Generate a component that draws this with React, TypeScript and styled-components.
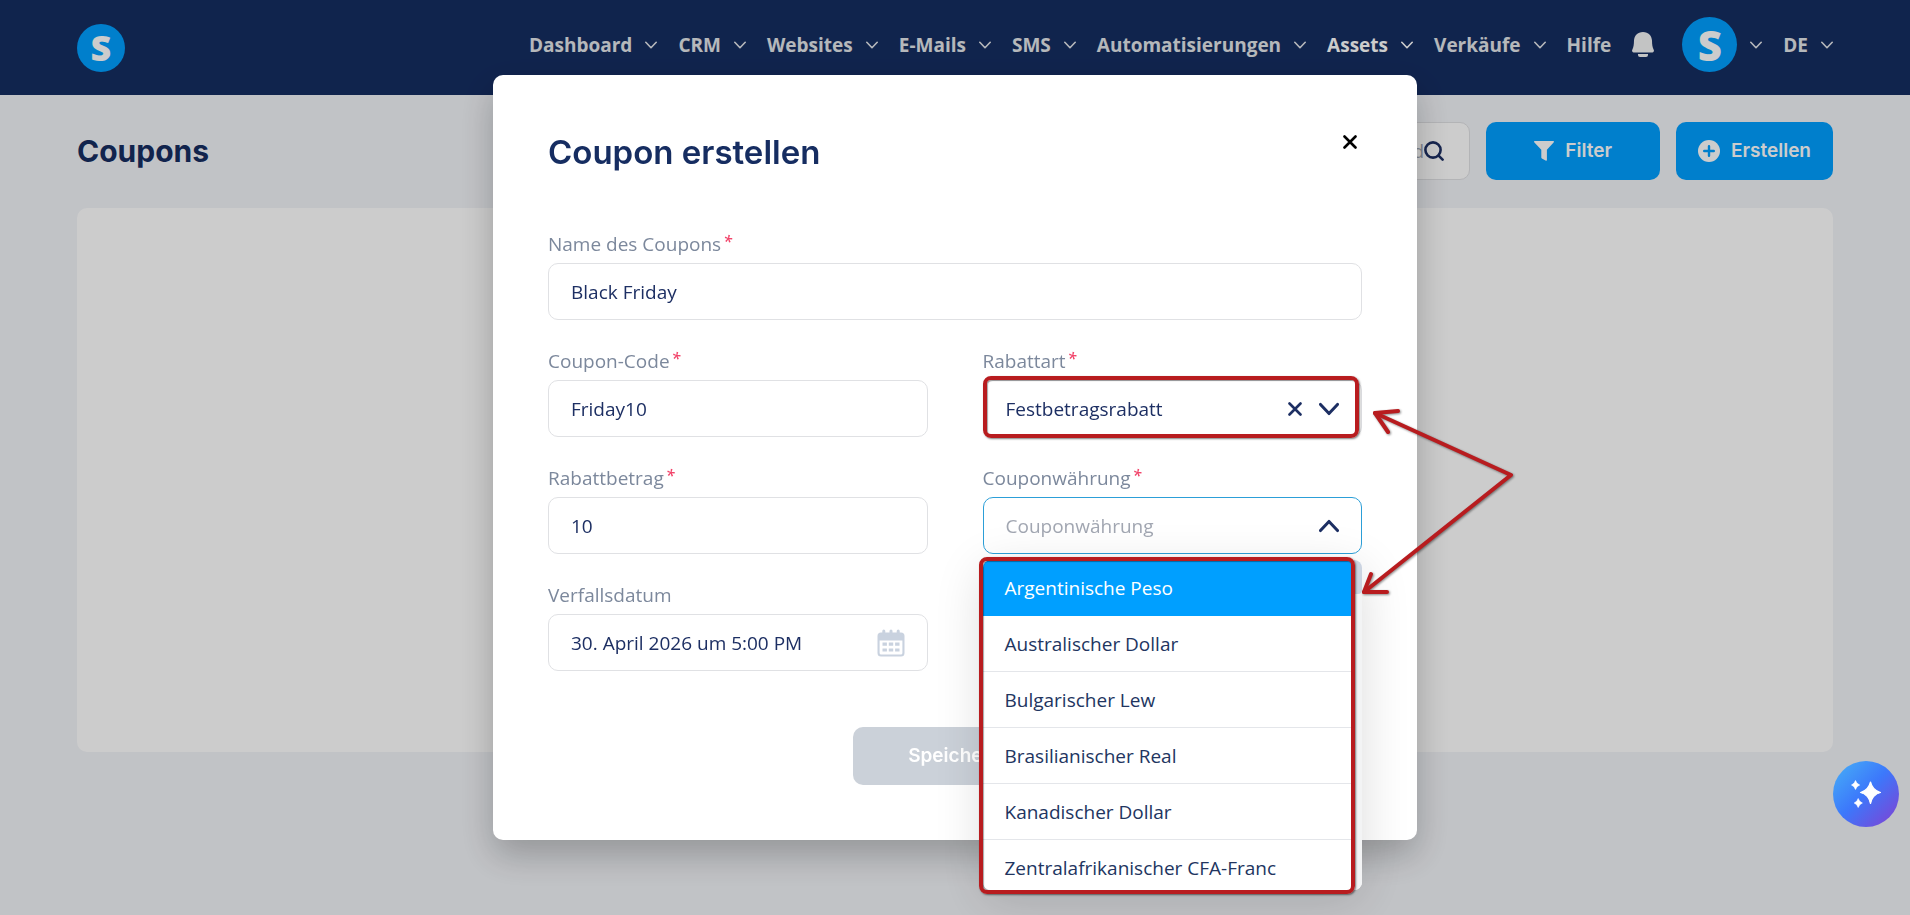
import React, { useId, useState } from 'react';
import styled, { createGlobalStyle, css } from 'styled-components';

const colors = {
  navy: '#162d61',
  text: '#1d2f63',
  label: '#7c889c',
  placeholder: '#a2a7b2',
  border: '#e0e1e4',
  blue: '#009fff',
  mark: '#b81c1f',
};

const GlobalStyle = createGlobalStyle`
  *, *::before, *::after { box-sizing: border-box; }
  body {
    margin: 0;
    background: #f2f4f8;
    color: ${colors.text};
    font-family: "Open Sans", "Noto Sans", sans-serif;
    font-size: 19px;
    line-height: 26px;
  }
  button, input, select { font: inherit; color: inherit; }
`;

const plainButton = css`
  border: 0;
  padding: 0;
  background: none;
  cursor: pointer;
`;

/* ---------- Header ---------- */

const Header = styled.header`
  display: flex;
  align-items: center;
  justify-content: space-between;
  height: 95px;
  padding: 0 77px;
  background: #152d61;
`;

const Logo = styled.span<{ $size: number }>`
  display: flex;
  align-items: center;
  justify-content: center;
  flex: none;
  width: ${(p) => p.$size}px;
  height: ${(p) => p.$size}px;
  border-radius: 50%;
  background: ${colors.blue};
  color: #fff;
  font-family: "Open Sans", sans-serif;
  font-size: ${(p) => (p.$size > 50 ? 42 : 36)}px;
  font-weight: 800;
  line-height: 1;
`;

const LogoLink = styled.a`
  display: flex;
  text-decoration: none;
`;

const Nav = styled.nav`
  display: flex;
  align-items: center;
  gap: 21px;
  padding-bottom: 6px;
`;

const NavButton = styled.button<{ $active?: boolean }>`
  ${plainButton}
  display: flex;
  align-items: center;
  gap: 13px;
  color: ${(p) => (p.$active ? '#ffffff' : '#e3e6ea')};
  font-weight: 700;
`;

const NavLink = styled.a`
  color: #e3e6ea;
  font-weight: 700;
  text-decoration: none;
`;

const Account = styled.div`
  display: flex;
  align-items: center;
  gap: 28px;
`;

/* ---------- Page ---------- */

const Page = styled.main`
  display: flex;
  flex-direction: column;
  gap: 28px;
  padding: 27px 77px;
`;

const PageBar = styled.div`
  display: flex;
  align-items: center;
  justify-content: space-between;
`;

const PageTitle = styled.h1`
  margin: 0;
  color: ${colors.navy};
  font-family: Inter, sans-serif;
  font-size: 30px;
  font-weight: 700;
  line-height: 44px;
`;

const Tools = styled.div`
  display: flex;
  gap: 16px;
`;

const SearchBox = styled.form`
  display: flex;
  align-items: center;
  width: 300px;
  padding: 0 25px 0 22px;
  border: 1px solid ${colors.border};
  border-radius: 10px;
  background: #fff;
`;

const SearchInput = styled.input`
  flex: 1;
  min-width: 0;
  border: 0;
  padding: 0;
  outline: 0;
  background: none;
  text-align: right;
  &::placeholder { color: ${colors.placeholder}; opacity: 1; }
`;

const IconButton = styled.button<{ $box?: number; $color?: string }>`
  ${plainButton}
  display: flex;
  align-items: center;
  justify-content: center;
  flex: none;
  width: ${(p) => p.$box ?? 20}px;
  height: ${(p) => p.$box ?? 20}px;
  color: ${(p) => p.$color ?? colors.text};
`;

const ActionButton = styled.button<{ $pad: number; $muted?: boolean }>`
  display: flex;
  align-items: center;
  justify-content: center;
  gap: 11px;
  height: 58px;
  padding: 0 ${(p) => p.$pad}px;
  border: 0;
  border-radius: 10px;
  background: ${(p) => (p.$muted ? '#cbd1d9' : colors.blue)};
  color: #fff;
  font-family: Inter, sans-serif;
  font-weight: 600;
  cursor: ${(p) => (p.$muted ? 'default' : 'pointer')};
`;

const Card = styled.section`
  min-height: 544px;
  border-radius: 10px;
  background: #fff;
`;

const AssistantButton = styled.button`
  position: fixed;
  right: 11px;
  bottom: 88px;
  z-index: 3;
  display: flex;
  align-items: center;
  justify-content: center;
  width: 66px;
  height: 66px;
  padding: 0;
  border: 0;
  border-radius: 50%;
  background: linear-gradient(135deg, #45a8f7 8%, #3c78fb 48%, #7b45d6 94%);
  cursor: pointer;
`;

/* ---------- Modal ---------- */

const Overlay = styled.div`
  position: fixed;
  inset: 0;
  z-index: 2;
  display: flex;
  align-items: flex-start;
  justify-content: center;
  padding-top: 75px;
  background: rgba(0, 0, 0, 0.2);
`;

const Modal = styled.div`
  position: relative;
  width: 924px;
  max-width: 100%;
  padding: 55px;
  border-radius: 10px;
  background: #fff;
  box-shadow: 0 15px 35px rgba(0, 0, 0, 0.24);
`;

const ModalHead = styled.div`
  display: flex;
  align-items: flex-start;
  justify-content: space-between;
  margin-bottom: 57px;
`;

const ModalTitle = styled.h2`
  margin: 0;
  color: ${colors.navy};
  font-family: Inter, sans-serif;
  font-size: 33px;
  font-weight: 600;
  line-height: 44px;
`;

const Form = styled.form`
  display: grid;
  grid-template-columns: 1fr 1fr;
  gap: 28px 55px;
`;

const FieldBox = styled.div<{ $wide?: boolean }>`
  display: flex;
  flex-direction: column;
  gap: 6px;
  min-width: 0;
  grid-column: ${(p) => (p.$wide ? '1 / -1' : 'auto')};
`;

const Label = styled.label`
  display: flex;
  gap: 2px;
  color: ${colors.label};
`;

const Required = styled.span`
  color: #f2456b;
  font-size: 16px;
  font-style: italic;
  font-weight: 600;
  line-height: 20px;
`;

const Control = styled.div<{ $focus?: boolean }>`
  position: relative;
  display: flex;
  align-items: center;
  gap: 14px;
  height: 57px;
  padding: 0 22px;
  border: 1px solid ${(p) => (p.$focus ? '#2c9fd8' : colors.border)};
  border-radius: 10px;
  background: #fff;
`;

const bareControl = css`
  flex: 1;
  min-width: 0;
  height: 100%;
  padding: 0;
  border: 0;
  outline: 0;
  background: none;
`;

const TextInput = styled.input`
  ${bareControl}
  &::placeholder { color: ${colors.placeholder}; opacity: 1; }
`;

const Select = styled.select`
  ${bareControl}
  appearance: none;
`;

const Anchor = styled.div`
  position: relative;
`;

const Menu = styled.div`
  position: absolute;
  top: calc(100% + 6px);
  left: 0;
  right: 0;
  z-index: 1;
  border-radius: 8px;
  background: #fff;
  box-shadow: 0 10px 50px rgba(0, 0, 0, 0.14);
`;

const MenuBody = styled.div`
  display: flex;
  height: 330px;
  overflow: hidden;
  border-radius: 8px;
`;

const Options = styled.ul`
  flex: 1;
  margin: 0;
  padding: 0;
  list-style: none;
`;

const ScrollTrack = styled.div`
  width: 11px;
  background: #f3f4f5;
`;

const ScrollThumb = styled.div`
  height: 34px;
  border-radius: 4px;
  background: #cbd4e1;
`;

const Option = styled.li<{ $active: boolean }>`
  height: 56px;
  padding: 0 22px;
  border-bottom: 1px solid ${(p) => (p.$active ? colors.blue : '#e4e6ea')};
  background: ${(p) => (p.$active ? colors.blue : '#fff')};
  color: ${(p) => (p.$active ? '#fff' : '#22355f')};
  line-height: 56px;
  white-space: nowrap;
  cursor: pointer;
`;

const Marker = styled.span<{ $inset: string }>`
  position: absolute;
  inset: ${(p) => p.$inset};
  z-index: 2;
  border: 4px solid ${colors.mark};
  border-radius: 8px;
  box-shadow: 1px 1px 2px rgba(0, 0, 0, 0.5), inset 1px 1px 1px rgba(0, 0, 0, 0.35);
  pointer-events: none;
`;

const Arrows = styled.svg`
  position: absolute;
  top: 325px;
  left: 862px;
  z-index: 3;
  overflow: visible;
  pointer-events: none;
  filter: drop-shadow(1px 1px 1px rgba(0, 0, 0, 0.45));
`;

const Footer = styled.div`
  display: flex;
  justify-content: center;
  margin-top: 56px;
`;

/* ---------- Icons ---------- */

const Chevron = ({ size = 12, up = false, weight = 1.6 }: { size?: number; up?: boolean; weight?: number }) => (
  <svg width={size} height={size} viewBox={`0 0 ${size} ${size}`} fill="none" stroke="currentColor" strokeWidth={weight} strokeLinecap="round" strokeLinejoin="round" aria-hidden="true">
    {up ? (
      <path d={`M${weight / 2} ${size * 0.73} L${size / 2} ${size * 0.27} L${size - weight / 2} ${size * 0.73}`} />
    ) : (
      <path d={`M${weight / 2} ${size * 0.27} L${size / 2} ${size * 0.73} L${size - weight / 2} ${size * 0.27}`} />
    )}
  </svg>
);

const Cross = () => (
  <svg width="14" height="14" viewBox="0 0 14 14" stroke="currentColor" strokeWidth="2.6" strokeLinecap="round" aria-hidden="true">
    <path d="M1.500 1.500L12.500 12.500M12.500 1.500L1.500 12.500" />
  </svg>
);

const Bell = () => (
  <svg width="22" height="25" viewBox="0 0 22 25" fill="#f4f5f6" aria-hidden="true">
    <path d="M11 0C5.5 0 2.2 3.9 2 8.6C1.9 13 1.6 15.4.3 17.8C-.3 19 .2 20.4 1.6 20.4H20.4C21.8 20.4 22.3 19 21.7 17.8C20.4 15.4 20.1 13 20 8.6C19.8 3.9 16.5 0 11 0Z" />
    <path d="M6 22H16V23Q16 25 14 25H8Q6 25 6 23Z" />
  </svg>
);

const SearchIcon = () => (
  <svg width="20" height="20" viewBox="0 0 20 20" fill="none" stroke="currentColor" strokeWidth="2.6" strokeLinecap="round" aria-hidden="true">
    <circle cx="9" cy="9" r="7.6" />
    <path d="M14.6 14.6L18.6 18.6" />
  </svg>
);

const FilterIcon = () => (
  <svg width="20" height="20" viewBox="0 0 20 20" fill="currentColor" aria-hidden="true">
    <path d="M0 .6Q0 0 .8 0H19.2Q20 0 20 .6Q20 1 19.6 1.5L12.9 8.8V19Q12.9 20 12 19.8L7.9 17.6Q7.3 17.2 7.3 16.5V8.8L.4 1.5Q0 1 0 .6Z" />
  </svg>
);

const PlusIcon = () => (
  <svg width="22" height="22" viewBox="0 0 22 22" aria-hidden="true">
    <circle cx="11" cy="11" r="11" fill="currentColor" />
    <path d="M11 6.2V15.8M6.2 11H15.8" stroke={colors.blue} strokeWidth="2.4" strokeLinecap="round" />
  </svg>
);

const CalendarIcon = () => (
  <svg width="28" height="28" viewBox="0 0 28 28" fill="none" aria-hidden="true">
    <path d="M.5 7Q.5 3.5 4 3.5H24Q27.5 3.5 27.5 7V24Q27.5 27.5 24 27.5H4Q.5 27.5.5 24ZM2.6 11.5V24Q2.6 25.5 4.1 25.5H23.9Q25.4 25.5 25.4 24V11.5Z" fill="#c9d2df" fillRule="evenodd" />
    <path d="M6.8 2V5M14 2V5M21.2 2V5" stroke="#c9d2df" strokeWidth="3" strokeLinecap="round" />
    <path d="M5.5 15.2H22.5M5.5 21H22.5" stroke="#c9d2df" strokeWidth="3.2" strokeDasharray="4.4 1.9" />
  </svg>
);

const SparkleIcon = () => (
  <svg width="30" height="30" viewBox="0 0 30 30" fill="#fff" aria-hidden="true">
    <path d="M19.500 3Q21.500 11.500 29.500 13.500Q21.500 15.500 19.500 24.500Q17.500 15.500 9.500 13.500Q17.500 11.500 19.500 3Z" stroke="#fff" strokeWidth="1.2" strokeLinejoin="round" />
    <path d="M4.500 1.500Q5.500 5 8.700 6Q5.500 7 4.500 10.500Q3.500 7 .5 6Q3.500 5 4.500 1.500Z" stroke="#fff" strokeWidth=".6" strokeLinejoin="round" />
    <path d="M7.200 19.500Q8.200 23 11.400 24Q8.200 25 7.200 28.500Q6.200 25 3.200 24Q6.200 23 7.200 19.500Z" stroke="#fff" strokeWidth=".6" strokeLinejoin="round" />
  </svg>
);

/* ---------- Parts ---------- */

type FieldProps = {
  label: string;
  required?: boolean;
  wide?: boolean;
  children: (id: string) => React.ReactNode;
};

function Field({ label, required, wide, children }: FieldProps) {
  const id = useId();
  return (
    <FieldBox $wide={wide}>
      <Label htmlFor={id}>
        {label}
        {required && <Required>*</Required>}
      </Label>
      {children(id)}
    </FieldBox>
  );
}

const navItems = ['Dashboard', 'CRM', 'Websites', 'E-Mails', 'SMS', 'Automatisierungen', 'Assets', 'Verkäufe'];

const currencies = [
  'Argentinische Peso',
  'Australischer Dollar',
  'Bulgarischer Lew',
  'Brasilianischer Real',
  'Kanadischer Dollar',
  'Zentralafrikanischer CFA-Franc',
];

function CurrencyPicker({ id }: { id: string }) {
  const [value, setValue] = useState('');
  const [open, setOpen] = useState(true);
  const [active, setActive] = useState(0);
  return (
    <Anchor>
      <Control $focus={open}>
        <TextInput
          id={id}
          role="combobox"
          aria-expanded={open}
          aria-controls="currency-list"
          placeholder="Couponwährung"
          value={value}
          onChange={(e) => setValue(e.target.value)}
        />
        <IconButton type="button" aria-label="Liste umschalten" onClick={() => setOpen(!open)}>
          <Chevron size={20} weight={3} up={open} />
        </IconButton>
      </Control>
      {open && (
        <Menu>
          <MenuBody>
            <Options id="currency-list" role="listbox" aria-label="Couponwährung">
              {currencies.map((name, i) => (
                <Option
                  key={name}
                  role="option"
                  aria-selected={i === active}
                  $active={i === active}
                  onMouseEnter={() => setActive(i)}
                  onClick={() => {
                    setValue(name);
                    setOpen(false);
                  }}
                >
                  {name}
                </Option>
              ))}
            </Options>
            <ScrollTrack>
              <ScrollThumb />
            </ScrollTrack>
          </MenuBody>
          <Marker $inset="-3px 7px -4px -4px" />
        </Menu>
      )}
    </Anchor>
  );
}

export default function App() {
  return (
    <>
      <GlobalStyle />
      <Header>
        <LogoLink href="#" aria-label="Startseite">
          <Logo $size={48}>S</Logo>
        </LogoLink>
        <Nav>
          {navItems.map((item) => (
            <NavButton key={item} type="button" $active={item === 'Assets'}>
              {item}
              <Chevron />
            </NavButton>
          ))}
          <NavLink href="#">Hilfe</NavLink>
          <Account>
            <IconButton type="button" $box={22} aria-label="Benachrichtigungen">
              <Bell />
            </IconButton>
            <NavButton type="button" aria-label="Konto">
              <Logo $size={55}>S</Logo>
              <Chevron />
            </NavButton>
          </Account>
          <NavButton type="button">
            DE
            <Chevron />
          </NavButton>
        </Nav>
      </Header>

      <Page>
        <PageBar>
          <PageTitle>Coupons</PageTitle>
          <Tools>
            <SearchBox role="search">
              <SearchInput type="text" aria-label="Suche" placeholder="Name oder Id" />
              <IconButton type="button" aria-label="Suchen">
                <SearchIcon />
              </IconButton>
            </SearchBox>
            <ActionButton type="button" $pad={48}>
              <FilterIcon />
              Filter
            </ActionButton>
            <ActionButton type="button" $pad={22}>
              <PlusIcon />
              Erstellen
            </ActionButton>
          </Tools>
        </PageBar>
        <Card />
      </Page>

      <Overlay>
        <Modal role="dialog" aria-modal="true" aria-labelledby="modal-title">
          <ModalHead>
            <ModalTitle id="modal-title">Coupon erstellen</ModalTitle>
            <IconButton type="button" $box={24} $color="#000" aria-label="Schließen">
              <Cross />
            </IconButton>
          </ModalHead>
          <Form id="coupon-form">
            <Field label="Name des Coupons" required wide>
              {(id) => (
                <Control>
                  <TextInput id={id} type="text" defaultValue="Black Friday" />
                </Control>
              )}
            </Field>
            <Field label="Coupon-Code" required>
              {(id) => (
                <Control>
                  <TextInput id={id} type="text" defaultValue="Friday10" />
                </Control>
              )}
            </Field>
            <Field label="Rabattart" required>
              {(id) => (
                <Anchor>
                  <Control>
                    <Select id={id} defaultValue="fixed">
                      <option value="fixed">Festbetragsrabatt</option>
                      <option value="percent">Prozentualer Rabatt</option>
                    </Select>
                    <IconButton type="button" aria-label="Auswahl löschen">
                      <Cross />
                    </IconButton>
                    <Chevron size={20} weight={3} />
                  </Control>
                  <Marker $inset="-4px 3px -1px 0" />
                </Anchor>
              )}
            </Field>
            <Field label="Rabattbetrag" required>
              {(id) => (
                <Control>
                  <TextInput id={id} type="text" inputMode="decimal" defaultValue="10" />
                </Control>
              )}
            </Field>
            <Field label="Couponwährung" required>
              {(id) => <CurrencyPicker id={id} />}
            </Field>
            <Field label="Verfallsdatum">
              {(id) => (
                <Control>
                  <TextInput id={id} type="text" defaultValue="30. April 2026 um 5:00 PM" />
                  <IconButton type="button" $box={28} aria-label="Kalender öffnen">
                    <CalendarIcon />
                  </IconButton>
                </Control>
              )}
            </Field>
          </Form>
          <Footer>
            <ActionButton type="submit" form="coupon-form" $pad={55} $muted disabled>
              Speichern
            </ActionButton>
          </Footer>
          <Arrows width="160" height="200" viewBox="0 0 160 200" fill="none" stroke={colors.mark} strokeWidth="4" strokeLinecap="round" strokeLinejoin="round" aria-hidden="true">
            <path d="M20 13L156 75L9 192" />
            <path d="M43 11L20 13L33 32" />
            <path d="M16 174L9 192L32 192" />
          </Arrows>
        </Modal>
      </Overlay>

      <AssistantButton type="button" aria-label="KI-Assistent">
        <SparkleIcon />
      </AssistantButton>
    </>
  );
}
